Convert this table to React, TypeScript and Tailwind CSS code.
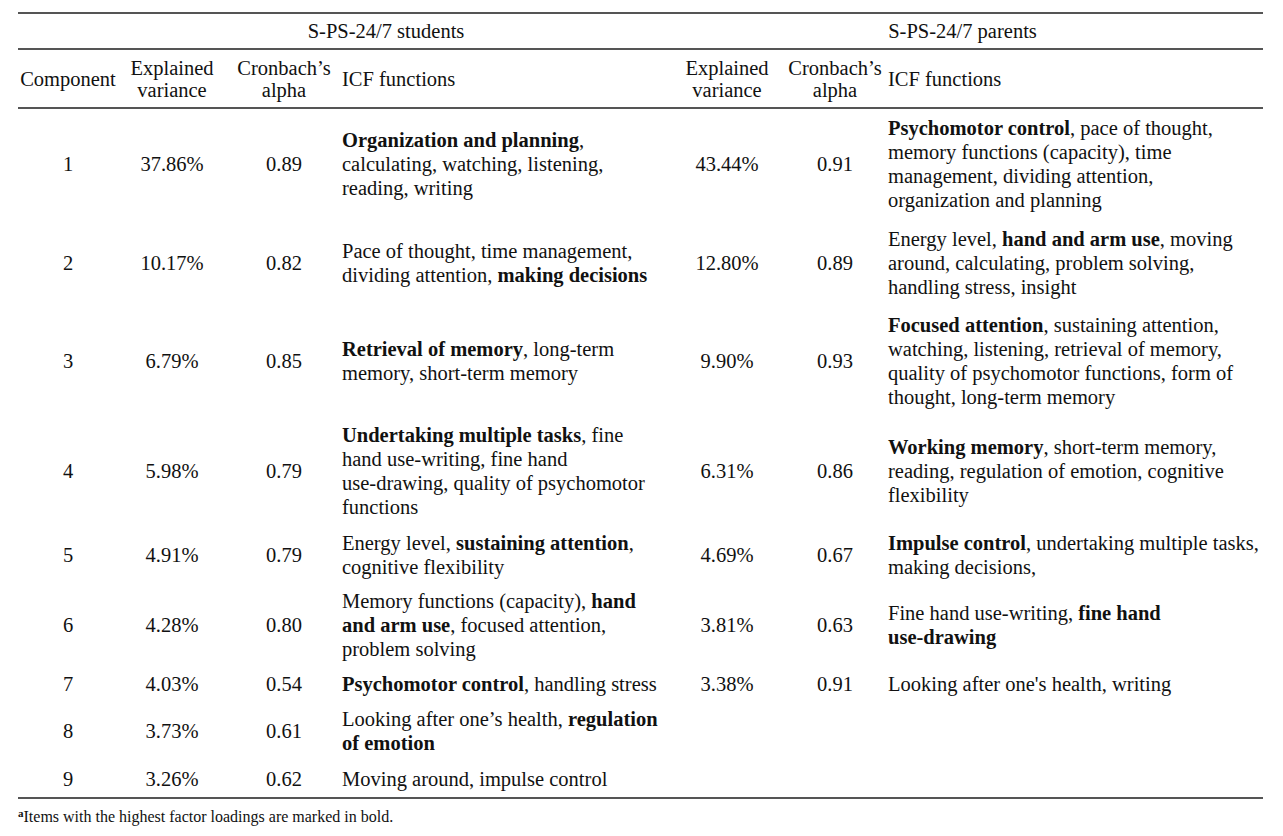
import React from "react";

type Row = {
  h: string;
  n: string;
  ev1: string;
  ca1: string;
  icf1: string[];
  ev2: string;
  ca2: string;
  icf2: string[];
};

const rows: Row[] = [
  {
    h: "h-[110px]",
    n: "1",
    ev1: "37.86%",
    ca1: "0.89",
    icf1: ["**Organization and planning**,", "calculating, watching, listening,", "reading, writing"],
    ev2: "43.44%",
    ca2: "0.91",
    icf2: [
      "**Psychomotor control**, pace of thought,",
      "memory functions (capacity), time",
      "management, dividing attention,",
      "organization and planning",
    ],
  },
  {
    h: "h-[87px]",
    n: "2",
    ev1: "10.17%",
    ca1: "0.82",
    icf1: ["Pace of thought, time management,", "dividing attention, **making decisions**"],
    ev2: "12.80%",
    ca2: "0.89",
    icf2: [
      "Energy level, **hand and arm use**, moving",
      "around, calculating, problem solving,",
      "handling stress, insight",
    ],
  },
  {
    h: "h-[110px]",
    n: "3",
    ev1: "6.79%",
    ca1: "0.85",
    icf1: ["**Retrieval of memory**, long-term", "memory, short-term memory"],
    ev2: "9.90%",
    ca2: "0.93",
    icf2: [
      "**Focused attention**, sustaining attention,",
      "watching, listening, retrieval of memory,",
      "quality of psychomotor functions, form of",
      "thought, long-term memory",
    ],
  },
  {
    h: "h-[109px]",
    n: "4",
    ev1: "5.98%",
    ca1: "0.79",
    icf1: [
      "**Undertaking multiple tasks**, fine",
      "hand use-writing, fine hand",
      "use-drawing, quality of psychomotor",
      "functions",
    ],
    ev2: "6.31%",
    ca2: "0.86",
    icf2: [
      "**Working memory**, short-term memory,",
      "reading, regulation of emotion, cognitive",
      "flexibility",
    ],
  },
  {
    h: "h-[59px]",
    n: "5",
    ev1: "4.91%",
    ca1: "0.79",
    icf1: ["Energy level, **sustaining attention**,", "cognitive flexibility"],
    ev2: "4.69%",
    ca2: "0.67",
    icf2: ["**Impulse control**, undertaking multiple tasks,", "making decisions,"],
  },
  {
    h: "h-[82px]",
    n: "6",
    ev1: "4.28%",
    ca1: "0.80",
    icf1: [
      "Memory functions (capacity), **hand**",
      "**and arm use**, focused attention,",
      "problem solving",
    ],
    ev2: "3.81%",
    ca2: "0.63",
    icf2: ["Fine hand use-writing, **fine hand**", "**use-drawing**"],
  },
  {
    h: "h-[35px]",
    n: "7",
    ev1: "4.03%",
    ca1: "0.54",
    icf1: ["**Psychomotor control**, handling stress"],
    ev2: "3.38%",
    ca2: "0.91",
    icf2: ["Looking after one's health, writing"],
  },
  {
    h: "h-[60px]",
    n: "8",
    ev1: "3.73%",
    ca1: "0.61",
    icf1: ["Looking after one\u2019s health, **regulation**", "**of emotion**"],
    ev2: "",
    ca2: "",
    icf2: [],
  },
  {
    h: "h-[36px]",
    n: "9",
    ev1: "3.26%",
    ca1: "0.62",
    icf1: ["Moving around, impulse control"],
    ev2: "",
    ca2: "",
    icf2: [],
  },
];

function Line({ text }: { text: string }) {
  const parts = text.split("**");
  return (
    <div className="whitespace-nowrap">
      {parts.map((p, i) =>
        i % 2 === 1 ? (
          <b key={i} className="font-bold">
            {p}
          </b>
        ) : (
          <span key={i}>{p}</span>
        )
      )}
    </div>
  );
}

function Rule() {
  return <div className="h-[2px] w-full bg-[#555]" />;
}

const grid =
  "grid grid-cols-[100px_108px_116px_330px_110px_106px_375px] items-center";

export default function App() {
  return (
    <div
      className="min-h-[836px] w-[1283px] bg-white pt-[12px] text-[#111]"
      style={{ fontFamily: '"Liberation Serif", "Times New Roman", serif' }}
    >
      <div className="ml-[18px] w-[1245px] text-[20.5px] leading-[24px]">
        <Rule />
        <div className={grid + " h-[34px]"}>
          <div />
          <div className="col-span-3 pr-[18px] text-center">S-PS-24/7 students</div>
          <div className="col-span-3 pr-[10px] text-center">S-PS-24/7 parents</div>
        </div>
        <Rule />
        <div className={grid + " h-[57px] leading-[22px]"}>
          <div className="text-center">Component</div>
          <div className="text-center">
            Explained
            <br />
            variance
          </div>
          <div className="text-center">
            Cronbach’s
            <br />
            alpha
          </div>
          <div>ICF functions</div>
          <div className="text-center">
            Explained
            <br />
            variance
          </div>
          <div className="text-center">
            Cronbach’s
            <br />
            alpha
          </div>
          <div>ICF functions</div>
        </div>
        <Rule />
        {rows.map((r) => (
          <div key={r.n} className={grid + " " + r.h}>
            <div className="text-center">{r.n}</div>
            <div className="text-center">{r.ev1}</div>
            <div className="text-center">{r.ca1}</div>
            <div>
              {r.icf1.map((l, i) => (
                <Line key={i} text={l} />
              ))}
            </div>
            <div className="text-center">{r.ev2}</div>
            <div className="text-center">{r.ca2}</div>
            <div>
              {r.icf2.map((l, i) => (
                <Line key={i} text={l} />
              ))}
            </div>
          </div>
        ))}
        <Rule />
        <div className="mt-[8px] text-[16px] leading-[20px]">
          <sup className="text-[11px] font-bold">a</sup>Items with the highest factor loadings are marked in bold.
        </div>
      </div>
    </div>
  );
}
